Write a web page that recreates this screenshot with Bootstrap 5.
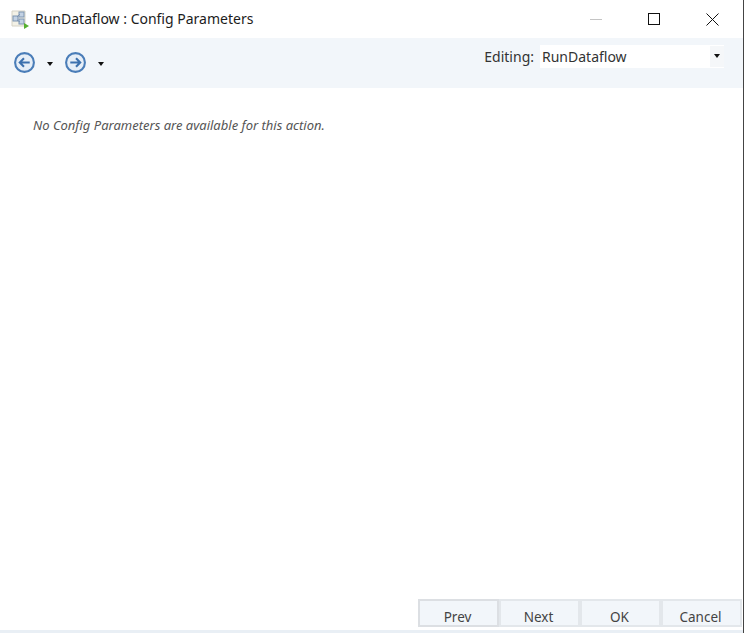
<!DOCTYPE html>
<html lang="en"><head><meta charset="utf-8"><title>RunDataflow : Config Parameters</title>
<link href="https://cdn.jsdelivr.net/npm/bootstrap@5.3.0/dist/css/bootstrap.min.css" rel="stylesheet">
<style>
html,body{height:100%;margin:0}
body{font-family:"Noto Sans","Open Sans",sans-serif;background:#fff;color:#222;overflow:hidden}
.win{height:633px;width:744px;border-right:1px solid #444}
.titlebar{height:38px;padding:0 1px 0 11px}
.title-text{font-size:14px;margin-left:6px;line-height:38px;color:#1c1c1c}
.wc{width:58.500px;height:38px}
.tools{height:50px;background:#f2f6fa;padding:0 19px 0 13px}
.tri{width:0;height:0;border-left:3.5px solid transparent;border-right:3.5px solid transparent;border-top:4px solid #111}
.nav-set{width:51px;margin-top:-1px}
.nav-gap{margin-left:10.500px;margin-top:2px}
.edit-label{font-size:14px;margin-right:6px;color:#333}
.edit-box{width:184px;height:23px;background:#fff;padding-left:2px;font-size:14px;color:#333}
.edit-drop{width:14px;height:21px;background:#f5f7f9}
.edit-wrap{margin-top:-14px}
.msg{padding:28px 0 0 33px;font-size:13px;font-style:italic;color:#555;line-height:18px}
.foot{padding-left:418px;height:31px}
.fbtn{width:81px;height:28px;background:#f2f6fa;border:2px solid #e3e7eb;font-size:13.5px;color:#444;line-height:32px;text-align:center;padding-right:2px}
.fbtn-first{border-color:#dcdfe3}
.strip{height:3px;background:#e9eff5}
</style></head><body>
<div class="win d-flex flex-column">
 <div class="titlebar d-flex align-items-center">
  <svg width="18" height="20" viewBox="0 0 18 20"><path d="M1 2h13v15H1z" fill="#f3f1e6" stroke="#d6d3c6"/><rect x="2" y="7" width="5" height="5" fill="#c3d2e4" stroke="#7f96b2"/><rect x="8" y="3" width="5" height="5" fill="#c3d2e4" stroke="#7f96b2"/><rect x="8" y="10" width="5" height="5" fill="#c3d2e4" stroke="#7f96b2"/><path d="M6 8l3-3M6 11l3 2" stroke="#7f96b2" fill="none"/><path d="M13 14l5 3-5 3z" fill="#56b030"/></svg>
  <span class="title-text">RunDataflow : Config Parameters</span>
  <div class="ms-auto d-flex">
   <div class="wc d-flex align-items-center justify-content-center"><svg width="12" height="12"><path d="M0 6.500h12" stroke="#c4c4c4"/></svg></div>
   <div class="wc d-flex align-items-center justify-content-center"><svg width="12" height="12"><rect x=".5" y=".5" width="11" height="11" fill="none" stroke="#111"/></svg></div>
   <div class="wc d-flex align-items-center justify-content-center"><svg width="13" height="13"><path d="M.5.5l12 12M12.500.5l-12 12" stroke="#111"/></svg></div>
  </div>
 </div>
 <div class="tools d-flex align-items-center">
  <div class="nav-set d-flex align-items-center">
   <svg width="23" height="23" viewBox="0 0 22 22"><circle cx="11" cy="11" r="9" fill="#e6eef7" stroke="#4a7db8" stroke-width="2"/><path d="M16 11H7M10.500 7L6.500 11l4 4" fill="none" stroke="#3c70ad" stroke-width="2"/></svg>
   <div class="tri nav-gap"></div>
  </div>
  <div class="nav-set d-flex align-items-center">
   <svg width="23" height="23" viewBox="0 0 22 22"><circle cx="11" cy="11" r="9" fill="#e6eef7" stroke="#4a7db8" stroke-width="2"/><path d="M6 11h9M11.500 7l4 4-4 4" fill="none" stroke="#3c70ad" stroke-width="2"/></svg>
   <div class="tri nav-gap"></div>
  </div>
  <div class="ms-auto d-flex align-items-center edit-wrap">
   <span class="edit-label">Editing:</span>
   <div class="edit-box d-flex align-items-center justify-content-between"><span>RunDataflow</span><div class="edit-drop d-flex align-items-center justify-content-center"><div class="tri"></div></div></div>
  </div>
 </div>
 <div class="flex-grow-1"><div class="msg">No Config Parameters are available for this action.</div></div>
 <div class="foot d-flex">
  <div class="fbtn fbtn-first">Prev</div><div class="fbtn">Next</div><div class="fbtn">OK</div><div class="fbtn">Cancel</div>
 </div>
 <div class="strip"></div>
</div>
<script src="https://cdn.jsdelivr.net/npm/bootstrap@5.3.0/dist/js/bootstrap.bundle.min.js"></script>
</body></html>
